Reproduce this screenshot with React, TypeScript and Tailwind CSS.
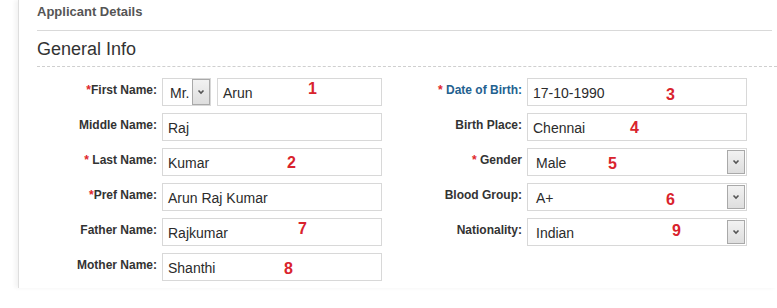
import React from 'react';

type Field = {
  value: string;
  select?: boolean;
  title?: boolean;
  mark?: { n: string; left: number; top: number };
};

type Side = {
  label: string;
  star?: 'tight' | 'spaced';
  blue?: boolean;
  field?: Field;
};

const rows: { left: Side; right?: Side }[] = [
  {
    left: { label: 'First Name:', star: 'tight', field: { value: 'Arun', title: true, mark: { n: '1', left: 91, top: 3 } } },
    right: { label: 'Date of Birth:', star: 'spaced', blue: true, field: { value: '17-10-1990', mark: { n: '3', left: 139, top: 9 } } },
  },
  {
    left: { label: 'Middle Name:', field: { value: 'Raj' } },
    right: { label: 'Birth Place:', field: { value: 'Chennai', mark: { n: '4', left: 103, top: 7 } } },
  },
  {
    left: { label: 'Last Name:', star: 'spaced', field: { value: 'Kumar', mark: { n: '2', left: 125, top: 7 } } },
    right: { label: 'Gender', star: 'spaced', field: { value: 'Male', select: true, mark: { n: '5', left: 81, top: 8 } } },
  },
  {
    left: { label: 'Pref Name:', star: 'tight', field: { value: 'Arun Raj Kumar' } },
    right: { label: 'Blood Group:', field: { value: 'A+', select: true, mark: { n: '6', left: 139, top: 9 } } },
  },
  {
    left: { label: 'Father Name:', field: { value: 'Rajkumar', mark: { n: '7', left: 136, top: 3 } } },
    right: { label: 'Nationality:', field: { value: 'Indian', select: true, mark: { n: '9', left: 145, top: 5 } } },
  },
  {
    left: { label: 'Mother Name:', field: { value: 'Shanthi', mark: { n: '8', left: 122, top: 8 } } },
  },
];

const Chevron = () => (
  <svg width="8" height="6" viewBox="0 0 8 6" fill="none">
    <path d="M1.5 1.5 L4 4 L6.5 1.5" stroke="#555" strokeWidth="1.6" />
  </svg>
);

const ArrowBox = () => (
  <div className="absolute right-[1px] top-[1px] bottom-[1px] w-[18px] flex items-center justify-center border border-[#a9a9a9] bg-gradient-to-b from-[#f2f2f2] to-[#dedede]">
    <Chevron />
  </div>
);

const Mark = ({ n, left, top }: { n: string; left: number; top: number }) => (
  <span
    className="absolute text-[16px] leading-[16px] font-bold text-[#d9232d]"
    style={{ left, top }}
  >
    {n}
  </span>
);

const Box = ({ field, width }: { field: Field; width: number }) => (
  <div
    className={`relative h-[28px] border border-[#d8d8d8] bg-white flex items-center text-[14px] text-[#2b2b2b] ${
      field.select ? 'pl-[8px]' : 'pl-[5px]'
    }`}
    style={{ width }}
  >
    <span className="leading-none pt-[1px]">{field.value}</span>
    {field.select && <ArrowBox />}
  </div>
);

const FieldView = ({ field }: { field: Field }) => {
  if (field.title) {
    return (
      <div className="relative flex gap-[6px]">
        <div className="relative w-[49px] h-[28px] border border-[#d8d8d8] bg-white flex items-center pl-[7px] text-[14px] text-[#2b2b2b]">
          <span className="leading-none pt-[1px]">Mr.</span>
          <div className="absolute right-0 top-0 bottom-0 w-[18px] flex items-center justify-center border border-[#a9a9a9] bg-gradient-to-b from-[#f2f2f2] to-[#dedede]">
            <Chevron />
          </div>
        </div>
        <div className="relative">
          <Box field={field} width={165} />
          {field.mark && <Mark {...field.mark} />}
        </div>
      </div>
    );
  }
  return (
    <div className="relative">
      <Box field={field} width={220} />
      {field.mark && <Mark {...field.mark} />}
    </div>
  );
};

const Label = ({ side, width }: { side: Side; width: number }) => (
  <div
    className={`shrink-0 text-right pt-[5px] text-[12px] leading-[14px] font-bold ${
      side.blue ? 'text-[#23618f]' : 'text-[#333]'
    }`}
    style={{ width }}
  >
    {side.star && <span className="text-[#e0262c]">{side.star === 'spaced' ? '* ' : '*'}</span>}
    {side.label}
  </div>
);

export default function App() {
  return (
    <div
      className="w-[777px] h-[308px] bg-white overflow-hidden"
      style={{ fontFamily: '"Liberation Sans", Arial, sans-serif' }}
    >
      <div className="ml-[18px] h-[288px] border-l border-[#dedede] shadow-[-3px_0_4px_rgba(0,0,0,0.05)] pl-[18px]">
        <div className="h-[31px] mr-[5px] border-b border-[#d9d9d9] pt-[4px]">
          <h2 className="text-[13px] leading-[16px] font-bold text-[#555]">Applicant Details</h2>
        </div>
        <div className="h-[36px] border-b border-dashed border-[#cfcfcf] pt-[7px]">
          <h3 className="text-[18px] leading-[22px] text-[#333]">General Info</h3>
        </div>

        <div className="mt-[11px] flex flex-col gap-[7px]">
          {rows.map((row, i) => (
            <div key={i} className="flex items-start">
              <Label side={row.left} width={120} />
              <div className="ml-[5px] w-[220px]">
                {row.left.field && <FieldView field={row.left.field} />}
              </div>
              {row.right && (
                <>
                  <Label side={row.right} width={140} />
                  <div className="ml-[5px]">
                    {row.right.field && <FieldView field={row.right.field} />}
                  </div>
                </>
              )}
            </div>
          ))}
        </div>
      </div>
    </div>
  );
}
